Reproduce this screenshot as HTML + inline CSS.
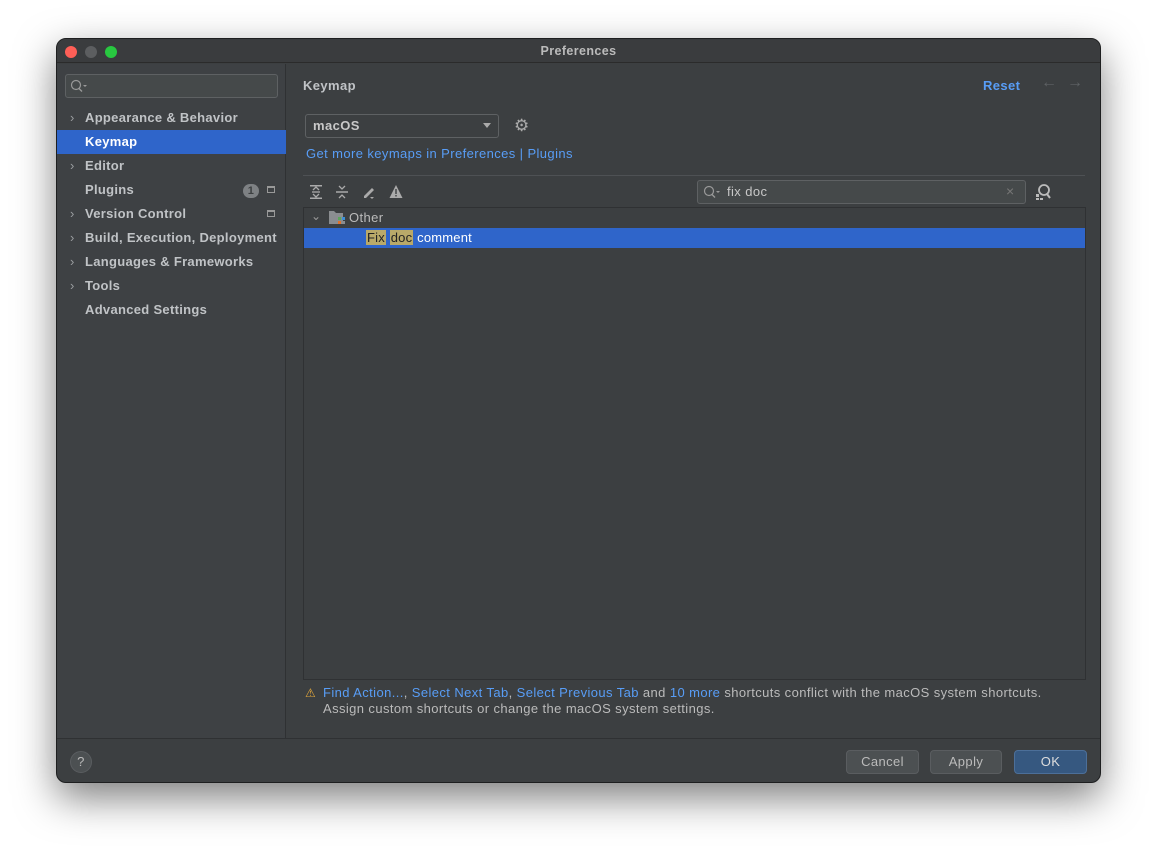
<!DOCTYPE html>
<html><head><style>
*{box-sizing:border-box;margin:0;padding:0}
body{width:1157px;height:858px;background:#fff;font-family:"Liberation Sans",sans-serif;font-size:13px;position:relative;overflow:hidden;letter-spacing:0.4px}
.win{position:absolute;left:56px;top:38px;width:1045px;height:745px;background:#3c3f41;border-radius:10px;border:1px solid #1e1f20;box-shadow:0 15px 40px rgba(0,0,0,.5);overflow:hidden}
.title{position:absolute;left:0;top:0;width:100%;height:24px;background:#3a3c3e;border-bottom:1px solid #2b2b2b;color:#bbb;text-align:center;font-weight:bold;font-size:12.5px;line-height:25px}
.dot{position:absolute;top:7px;width:12px;height:12px;border-radius:50%}
.side{position:absolute;left:0;top:25px;width:229px;height:674px;background:#3e4144;border-right:1px solid #2f3133}
.abs{position:absolute}
.item{position:absolute;left:0;width:229px;height:24px;line-height:24px;padding-left:28px;color:#c0c3c6;font-weight:bold;letter-spacing:0.3px}
.arr{position:absolute;left:13px;top:0;color:#9a9da0;font-weight:normal}
.link{color:#589df6}
.btn{position:absolute;top:711px;height:24px;border-radius:4px;border:1px solid #5a5d60;background:#4c5052;color:#bbb;text-align:center;line-height:22px}
</style></head><body>
<div class="win">
 <div class="title">Preferences
  <div class="dot" style="left:8px;background:#fe5f57"></div>
  <div class="dot" style="left:28px;background:#5c5e60"></div>
  <div class="dot" style="left:48px;background:#28c840"></div>
 </div>
 <div class="side">
  <div class="abs" style="left:8px;top:10px;width:213px;height:24px;border:1px solid #5e6163;border-radius:3px;background:#45494a"></div>
  <svg class="abs" style="left:13px;top:15px" width="18" height="14"><circle cx="6" cy="6" r="4.5" fill="none" stroke="#999" stroke-width="1.2"/><line x1="9" y1="9.5" x2="12" y2="12.5" stroke="#999" stroke-width="1.3"/><path d="M13 6h4l-2 2z" fill="#999"/></svg>
  <div class="item" style="top:42px"><span class="arr">›</span>Appearance &amp; Behavior</div>
  <div class="item" style="top:66px;background:#2f65ca;color:#fff">Keymap</div>
  <div class="item" style="top:90px"><span class="arr">›</span>Editor</div>
  <div class="item" style="top:114px">Plugins</div>
  <div class="abs" style="left:186px;top:120px;width:16px;height:14px;border-radius:7px;background:#7e8184;color:#3c3f41;font-size:11px;text-align:center;line-height:14px;font-weight:bold">1</div>
  <div class="abs" style="left:210px;top:122px;width:8px;height:7px;border:1px solid #999;border-top-width:2px"></div>
  <div class="item" style="top:138px"><span class="arr">›</span>Version Control</div>
  <div class="abs" style="left:210px;top:146px;width:8px;height:7px;border:1px solid #999;border-top-width:2px"></div>
  <div class="item" style="top:162px"><span class="arr">›</span>Build, Execution, Deployment</div>
  <div class="item" style="top:186px"><span class="arr">›</span>Languages &amp; Frameworks</div>
  <div class="item" style="top:210px"><span class="arr">›</span>Tools</div>
  <div class="item" style="top:234px">Advanced Settings</div>
 </div>
 <div class="abs" style="left:246px;top:39px;color:#c0c3c6;font-weight:bold">Keymap</div>
 <div class="abs link" style="left:926px;top:39px;font-weight:bold">Reset</div>
 <div class="abs" style="left:984px;top:35px;color:#5f6265;font-size:16px">←</div>
 <div class="abs" style="left:1010px;top:35px;color:#5f6265;font-size:16px">→</div>
 <div class="abs" style="left:248px;top:75px;width:194px;height:24px;border:1px solid #5e6163;border-radius:3px;background:#3c3f41;color:#c8c8c8;font-weight:bold;line-height:22px;padding-left:7px">macOS</div>
 <div class="abs" style="left:426px;top:84px;border:4px solid transparent;border-top:5px solid #aaa"></div>
 <div class="abs" style="left:457px;top:77px;color:#aaa;font-size:17px">⚙</div>
 <div class="abs link" style="left:249px;top:107px">Get more keymaps in Preferences | Plugins</div>
 <div class="abs" style="left:246px;top:136px;width:782px;height:1px;background:#4e5154"></div>
 <svg class="abs" style="left:252px;top:145px" width="100" height="16" fill="#aaa" stroke="#aaa">
  <rect x="1" y="1" width="12" height="1.5" stroke="none"/><rect x="1" y="13.5" width="12" height="1.5" stroke="none"/><path d="M4 6l3-3 3 3M4 10l3 3 3-3" fill="none" stroke-width="1.3"/><line x1="3" y1="8" x2="11" y2="8" stroke-width="1.3"/>
  <line x1="27" y1="8" x2="39" y2="8" stroke-width="1.5"/><path d="M30 2l3 3 3-3M30 14l3-3 3 3" fill="none" stroke-width="1.3"/>
  <path d="M55 12l8-8 2 2-8 8h-2z" stroke="none"/><path d="M61 13h4l-2 2z" stroke="none"/>
  <path d="M87 1l6.5 13h-13z" stroke="none"/><rect x="86.3" y="5" width="1.4" height="5" fill="#3c3f41" stroke="none"/><rect x="86.3" y="11" width="1.4" height="1.5" fill="#3c3f41" stroke="none"/>
 </svg>
 <div class="abs" style="left:640px;top:141px;width:329px;height:24px;border:1px solid #5e6163;border-radius:3px;background:#45494a;color:#c8c8c8;line-height:22px;padding-left:29px">fix doc</div>
 <svg class="abs" style="left:646px;top:146px" width="18" height="14"><circle cx="6" cy="6" r="4.5" fill="none" stroke="#999" stroke-width="1.2"/><line x1="9" y1="9.5" x2="12" y2="12.5" stroke="#999" stroke-width="1.3"/><path d="M13 6h4l-2 2z" fill="#999"/></svg>
 <div class="abs" style="left:949px;top:144px;color:#777;font-size:14px">×</div>
 <svg class="abs" style="left:977px;top:144px" width="18" height="18"><circle cx="10" cy="7" r="5" fill="none" stroke="#bbb" stroke-width="1.8"/><line x1="13" y1="11" x2="16" y2="15" stroke="#bbb" stroke-width="2"/><rect x="2" y="11" width="3" height="3" fill="#bbb"/><rect x="2" y="15" width="3" height="2" fill="#bbb"/><rect x="6" y="15" width="3" height="2" fill="#bbb"/></svg>
 <div class="abs" style="left:246px;top:168px;width:783px;height:473px;border:1px solid #2f3133;background:#3c3f41"></div>
 <div class="abs" style="left:254px;top:170px;color:#999;font-size:12px">⌄</div>
 <svg class="abs" style="left:272px;top:171px" width="18" height="16"><path d="M0 1h5l2 2h7v11H0z" fill="#8a8d90"/><rect x="9" y="7" width="3" height="3" fill="#5aa55a"/><rect x="13" y="7" width="3" height="3" fill="#3d8fd6"/><rect x="9" y="11" width="3" height="3" fill="#e0712b"/><rect x="13" y="11" width="3" height="3" fill="#8a8d90"/></svg>
 <div class="abs" style="left:292px;top:171px;color:#bbb">Other</div>
 <div class="abs" style="left:247px;top:189px;width:781px;height:20px;background:#2f65ca"></div>
 <div class="abs" style="left:309px;top:191px;color:#fff;line-height:16px;letter-spacing:0.2px"><span style="background:#b9a969;color:#222;padding:0 1px">Fix</span> <span style="background:#b9a969;color:#222;padding:0 1px">doc</span> comment</div>
 <div class="abs" style="left:248px;top:647px;color:#e5a83b;font-size:12px">⚠</div>
 <div class="abs" style="left:266px;top:646px;color:#bbb;line-height:16px"><span class="link">Find Action...</span>, <span class="link">Select Next Tab</span>, <span class="link">Select Previous Tab</span> and <span class="link">10 more</span> shortcuts conflict with the macOS system shortcuts.<br>Assign custom shortcuts or change the macOS system settings.</div>
 <div class="abs" style="left:0;top:699px;width:100%;height:1px;background:#2f3133"></div>
 <div class="abs" style="left:13px;top:712px;width:22px;height:22px;border-radius:50%;background:#4c5052;border:1px solid #5a5d60;color:#bbb;text-align:center;line-height:20px">?</div>
 <div class="btn" style="left:789px;width:73px">Cancel</div>
 <div class="btn" style="left:873px;width:72px">Apply</div>
 <div class="btn" style="left:957px;width:73px;background:#365880;border-color:#4c6f99;color:#ddd">OK</div>
</div>
</body></html>
